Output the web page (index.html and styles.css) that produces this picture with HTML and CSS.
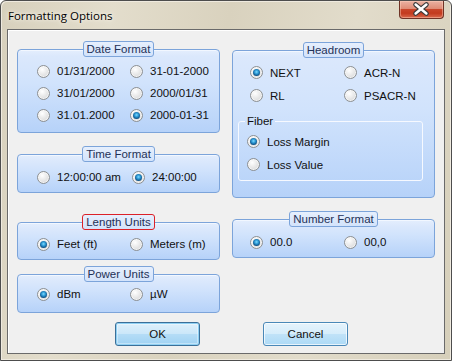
FILE: index.html
```html
<!DOCTYPE html>
<html>
<head>
<meta charset="utf-8">
<link rel="stylesheet" href="styles.css">
</head>
<body>
<div class="window">
  <div class="titlebar">
    <span class="title">Formatting Options</span>
    <div class="close">
      <svg width="45" height="18" viewBox="0 0 45 18">
        <path d="M17 4.5 L28 13.5 M28 4.5 L17 13.5" stroke="#3b3b3b" stroke-width="5" stroke-linecap="round"/>
        <path d="M17 4.5 L28 13.5 M28 4.5 L17 13.5" stroke="#ffffff" stroke-width="2.6" stroke-linecap="round"/>
      </svg>
    </div>
  </div>
  <div class="client">
    <div class="columns">
      <div class="col">
        <section class="group g-date">
          <div class="legend">Date Format</div>
          <div class="rows">
            <label class="opt"><span class="radio"></span>01/31/2000</label>
            <label class="opt"><span class="radio"></span>31-01-2000</label>
            <label class="opt"><span class="radio"></span>31/01/2000</label>
            <label class="opt"><span class="radio"></span>2000/01/31</label>
            <label class="opt"><span class="radio"></span>31.01.2000</label>
            <label class="opt"><span class="radio on"></span>2000-01-31</label>
          </div>
        </section>
        <section class="group g-time">
          <div class="legend">Time Format</div>
          <div class="rows wide">
            <label class="opt"><span class="radio"></span>12:00:00 am</label>
            <label class="opt"><span class="radio on"></span>24:00:00</label>
          </div>
        </section>
        <section class="group g-length">
          <div class="legend alert">Length Units</div>
          <div class="rows">
            <label class="opt"><span class="radio on"></span>Feet (ft)</label>
            <label class="opt"><span class="radio"></span>Meters (m)</label>
          </div>
        </section>
        <section class="group g-power">
          <div class="legend">Power Units</div>
          <div class="rows">
            <label class="opt"><span class="radio on"></span>dBm</label>
            <label class="opt"><span class="radio"></span>µW</label>
          </div>
        </section>
      </div>
      <div class="col">
        <section class="group g-head">
          <div class="legend">Headroom</div>
          <div class="rows right tall">
            <label class="opt"><span class="radio on"></span>NEXT</label>
            <label class="opt"><span class="radio"></span>ACR-N</label>
            <label class="opt"><span class="radio"></span>RL</label>
            <label class="opt"><span class="radio"></span>PSACR-N</label>
          </div>
          <fieldset class="fiber">
            <legend>Fiber</legend>
            <label class="opt"><span class="radio on"></span>Loss Margin</label>
            <label class="opt"><span class="radio"></span>Loss Value</label>
          </fieldset>
        </section>
        <section class="group g-number">
          <div class="legend">Number Format</div>
          <div class="rows right">
            <label class="opt"><span class="radio on"></span>00.0</label>
            <label class="opt"><span class="radio"></span>00,0</label>
          </div>
        </section>
      </div>
    </div>
    <div class="buttons">
      <button class="btn default">OK</button>
      <button class="btn">Cancel</button>
    </div>
  </div>
</div>
</body>
</html>
```

FILE: styles.css
```css
html, body {
  margin: 0;
  padding: 0;
  background: #ffffff;
}

.window {
  width: 452px;
  height: 361px;
  box-sizing: border-box;
  border: 1px solid #4d4d4d;
  border-radius: 6px 6px 0 0;
  background: linear-gradient(100deg, #d7d0bc 0%, #e3ddcc 22%, #d9d2be 45%, #e2dccb 70%, #d6cfba 100%);
  box-shadow: inset 1px 1px 0 #efeadf, inset -1px -1px 0 #efeadf;
  display: flex;
  flex-direction: column;
  font-family: "Liberation Sans", Arial, sans-serif;
}

.titlebar {
  height: 28px;
  display: flex;
  align-items: flex-start;
  justify-content: space-between;
  padding: 0 7px 0 7px;
  flex: none;
}

.title {
  font-family: "Open Sans", "Noto Sans", sans-serif;
  font-size: 11.5px;
  line-height: 14px;
  margin-top: 8px;
  color: #000;
  text-shadow: 0 0 6px #f6f3ea, 0 0 3px #f6f3ea;
}

.close {
  width: 45px;
  height: 18px;
  box-sizing: border-box;
  border: 1px solid #6f3326;
  border-top: none;
  border-radius: 0 0 4px 4px;
  background: linear-gradient(#eab1a2 0%, #de8c76 45%, #c8452a 50%, #c33a1e 72%, #d9694d 100%);
  box-shadow: inset 0 0 0 1px rgba(255, 210, 190, 0.45);
  display: flex;
}

.close svg {
  display: block;
  margin: -1px 0 0 -1px;
}

.client {
  flex: 1;
  margin: 0 6px 6px 6px;
  border: 1px solid #6a6a6a;
  background: #f0f0f0;
  box-shadow: inset 1px 1px 0 #ffffff;
  padding-left: 9px;
  display: flex;
  flex-direction: column;
}

.columns {
  display: grid;
  grid-template-columns: 203px 203px;
  column-gap: 12px;
  align-items: start;
}

.col {
  display: flex;
  flex-direction: column;
}

.group {
  border: 1px solid #7ca4da;
  border-radius: 4px;
  background: linear-gradient(#e4eefd 0px, #dbe8fc 6px, #d1e3fc 40%, #b6d2f9 100%);
  box-shadow: inset 0 1px 0 #f2f7ff;
}

.legend {
  width: fit-content;
  margin: -9px auto 0 auto;
  height: 14px;
  line-height: 14px;
  padding: 0 3px;
  border: 1px solid #7ca4da;
  border-radius: 3px;
  background: linear-gradient(#e6effd, #d3e3fb);
  font-size: 11.5px;
  color: #1f3157;
}

.legend.alert {
  border-color: #dc2128;
}

.rows {
  display: grid;
  grid-template-columns: 93px auto;
  grid-auto-rows: 22px;
  align-items: center;
  padding-left: 19px;
}

.rows.wide {
  grid-template-columns: 95px auto;
}

.rows.right {
  padding-left: 17px;
  grid-template-columns: 94px auto;
}

.rows.tall {
  grid-auto-rows: 23px;
}

.opt {
  display: flex;
  align-items: center;
  white-space: nowrap;
  font-size: 11.5px;
  color: #111;
  height: 22px;
}

.radio {
  width: 13px;
  height: 13px;
  box-sizing: border-box;
  border-radius: 50%;
  border: 1px solid #8d9092;
  background: radial-gradient(circle at 38% 32%, #ffffff 0%, #ececec 40%, #cfd0d1 100%);
  box-shadow: inset 0 0 0 1px rgba(255, 255, 255, 0.6);
  margin-right: 7px;
  flex: none;
  display: flex;
  align-items: center;
  justify-content: center;
}

.radio.on::after {
  content: "";
  width: 7px;
  height: 7px;
  border-radius: 50%;
  background: radial-gradient(circle at 50% 42%, #7fdcff 0%, #2e9ad6 35%, #0d5287 70%, #0a3559 100%);
}

/* per-group vertical rhythm */
.g-date { margin-top: 19px; }
.g-date .rows { margin-top: 3px; padding-bottom: 6px; }

.g-time { margin-top: 21px; }
.g-time .rows { margin-top: 4px; padding-bottom: 4px; }

.g-length { margin-top: 29px; }
.g-length .rows { margin-top: 3px; padding-bottom: 4px; }

.g-power { margin-top: 14px; }
.g-power .rows { margin-top: 1px; padding-bottom: 7px; }

.g-head { margin-top: 20px; padding-bottom: 16px; }
.g-head .rows { margin-top: 3px; }

.g-number { margin-top: 21px; }
.g-number .rows { margin-top: 4px; padding-bottom: 4px; }

.fiber {
  margin: 8px 11px 0 5px;
  padding: 2px 0 4px 8px;
  border: 1px solid #f6f9ff;
  border-radius: 3px;
  min-inline-size: 0;
}

.fiber legend {
  padding: 0 2px;
  margin-left: -2px;
  font-size: 11.5px;
  line-height: 13px;
  color: #111;
}

.fiber .opt {
  height: 23px;
}

.buttons {
  display: flex;
  gap: 63px;
  padding-left: 98px;
  margin-top: 9px;
}

.btn {
  width: 85px;
  height: 24px;
  box-sizing: border-box;
  border: 1px solid #4a88b8;
  border-radius: 3px;
  background: linear-gradient(#e6f3fc 0%, #d6edfb 48%, #c0e2f8 52%, #addaf6 100%);
  box-shadow: inset 0 0 0 1px rgba(255, 255, 255, 0.7);
  font-family: "Liberation Sans", Arial, sans-serif;
  font-size: 11.5px;
  color: #111;
  padding: 0;
}

.btn.default {
  border-color: #3b6f98;
  box-shadow: inset 0 0 0 1px #8fd0f3, inset 0 0 0 2px rgba(255, 255, 255, 0.35);
  background: linear-gradient(#dff0fb 0%, #cbe7f9 48%, #b4dcf6 52%, #9fd2f3 100%);
}
```
